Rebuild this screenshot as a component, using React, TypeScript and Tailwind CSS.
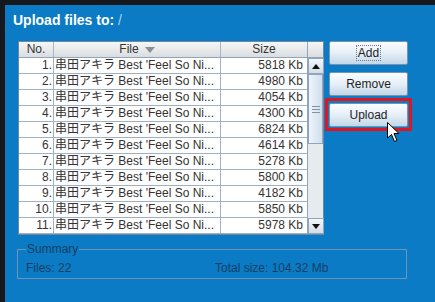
import { ReactNode } from 'react';

const rows = [5818, 4980, 4054, 4300, 6824, 4614, 5278, 5800, 4182, 5850, 5978];

const font = "font-['Liberation_Sans','Noto_Sans_CJK_JP',sans-serif]";

function Btn({ children, focus }: { children: ReactNode; focus?: boolean }) {
  return (
    <button className="w-[79px] h-[24px] rounded-[2px] border border-[#7893ad] bg-gradient-to-b from-[#fbfdff] via-[#e6eff7] to-[#c3d7e8] text-[12px] text-[#1e1e1e] flex items-center justify-center">
      <span className={focus ? 'px-[1px] border border-dotted border-[#6b7c8c] leading-[14px]' : 'leading-[14px]'}>{children}</span>
    </button>
  );
}

function Arrow({ up }: { up?: boolean }) {
  return (
    <div className="h-[16px] w-[16px] border border-[#8ea5bd] bg-gradient-to-b from-[#f4f7fa] to-[#d3dde7] flex items-center justify-center">
      <svg width="8" height="5" viewBox="0 0 8 5">
        <path d={up ? 'M0 5 L4 0 L8 5 Z' : 'M0 0 L8 0 L4 5 Z'} fill="#111" />
      </svg>
    </div>
  );
}

export default function App() {
  return (
    <div className={`w-[435px] h-[302px] bg-[#15191d] pt-[5px] pl-[5px] ${font}`}>
      <div className="h-full bg-[#0a7bc4] pl-[8px] pt-[7px] relative">
        {/* Title */}
        <div className="text-[14px] leading-[16px] font-bold text-white">
          Upload files to: <span className="text-[#a8d4f2] font-normal">/</span>
        </div>

        <div className="pl-[5px] mt-[13px] flex gap-[5px]">
          {/* Table */}
          <div className="flex border border-[#6f88a2] bg-white">
            <div className="w-[288px]">
              <div className="grid grid-cols-[35px_167px_86px] h-[16px] border-b border-[#8ea5bd] bg-gradient-to-b from-[#f6f6f6] to-[#dadde0] text-[12px] leading-[15px] text-[#333]">
                <div className="text-center border-r border-[#a9b5c1]">No.</div>
                <div className="flex items-center justify-center gap-[6px] border-r border-[#a9b5c1]">
                  File
                  <svg width="10" height="6" viewBox="0 0 10 6">
                    <path d="M0 0 L10 0 L5 6 Z" fill="#8a8f95" />
                  </svg>
                </div>
                <div className="text-center">Size</div>
              </div>
              {rows.map((size, i) => (
                <div
                  key={i}
                  className="grid grid-cols-[35px_167px_86px] h-[16px] border-b border-[#9db2c7] text-[12px] leading-[15px] text-[#333]"
                >
                  <div className="text-right pr-[1px] border-r border-[#9db2c7]">{i + 1}.</div>
                  <div className="pl-[1px] border-r border-[#9db2c7] whitespace-nowrap overflow-hidden">
                    串田アキラ Best 'Feel So Ni...
                  </div>
                  <div className="text-right pr-[4px]">{size} Kb</div>
                </div>
              ))}
            </div>
            {/* Scrollbar */}
            <div className="w-[16px] flex flex-col border-l border-[#8ea5bd]">
              <div className="h-[16px] bg-gradient-to-b from-[#f6f6f6] to-[#dadde0] border-b border-[#8ea5bd]" />
              <Arrow up />
              <div className="h-[70px] border border-[#8ea5bd] bg-gradient-to-r from-[#eef4fa] to-[#cfdfee] flex flex-col items-center justify-center gap-[2px]">
                <div className="w-[8px] h-[1px] bg-[#7d93a9]" />
                <div className="w-[8px] h-[1px] bg-[#7d93a9]" />
                <div className="w-[8px] h-[1px] bg-[#7d93a9]" />
              </div>
              <div className="flex-1 bg-[#e6ebf0]" />
              <Arrow />
            </div>
          </div>

          {/* Buttons */}
          <div className="flex flex-col gap-[7px]">
            <Btn focus>Add</Btn>
            <Btn>Remove</Btn>
            <div className="relative">
              <Btn>Upload</Btn>
              <div className="absolute -left-[4px] -top-[5px] w-[87px] h-[33px] border-[3px] border-[#de1620] rounded-[1px]" />
              <svg className="absolute left-[58px] top-[19px]" width="13" height="21" viewBox="0 0 13 21">
                <path d="M0.5 0.5 L0.5 16 L4.5 12.5 L7.5 19.5 L10 18.5 L7 11.5 L12 11.5 Z" fill="#fff" stroke="#000" strokeWidth="1" strokeLinejoin="miter" />
              </svg>
            </div>
          </div>
        </div>

        {/* Summary */}
        <fieldset className="ml-[4px] mt-[7px] w-[390px] h-[37px] border border-[#6f93b4] px-[8px] text-[12px] text-[#183e66]">
          <legend className="px-[1px] leading-[14px]">Summary</legend>
          <div className="flex leading-[14px] mt-[5px]">
            <span className="w-[189px]">Files: 22</span>
            <span>Total size: 104.32 Mb</span>
          </div>
        </fieldset>
      </div>
    </div>
  );
}
